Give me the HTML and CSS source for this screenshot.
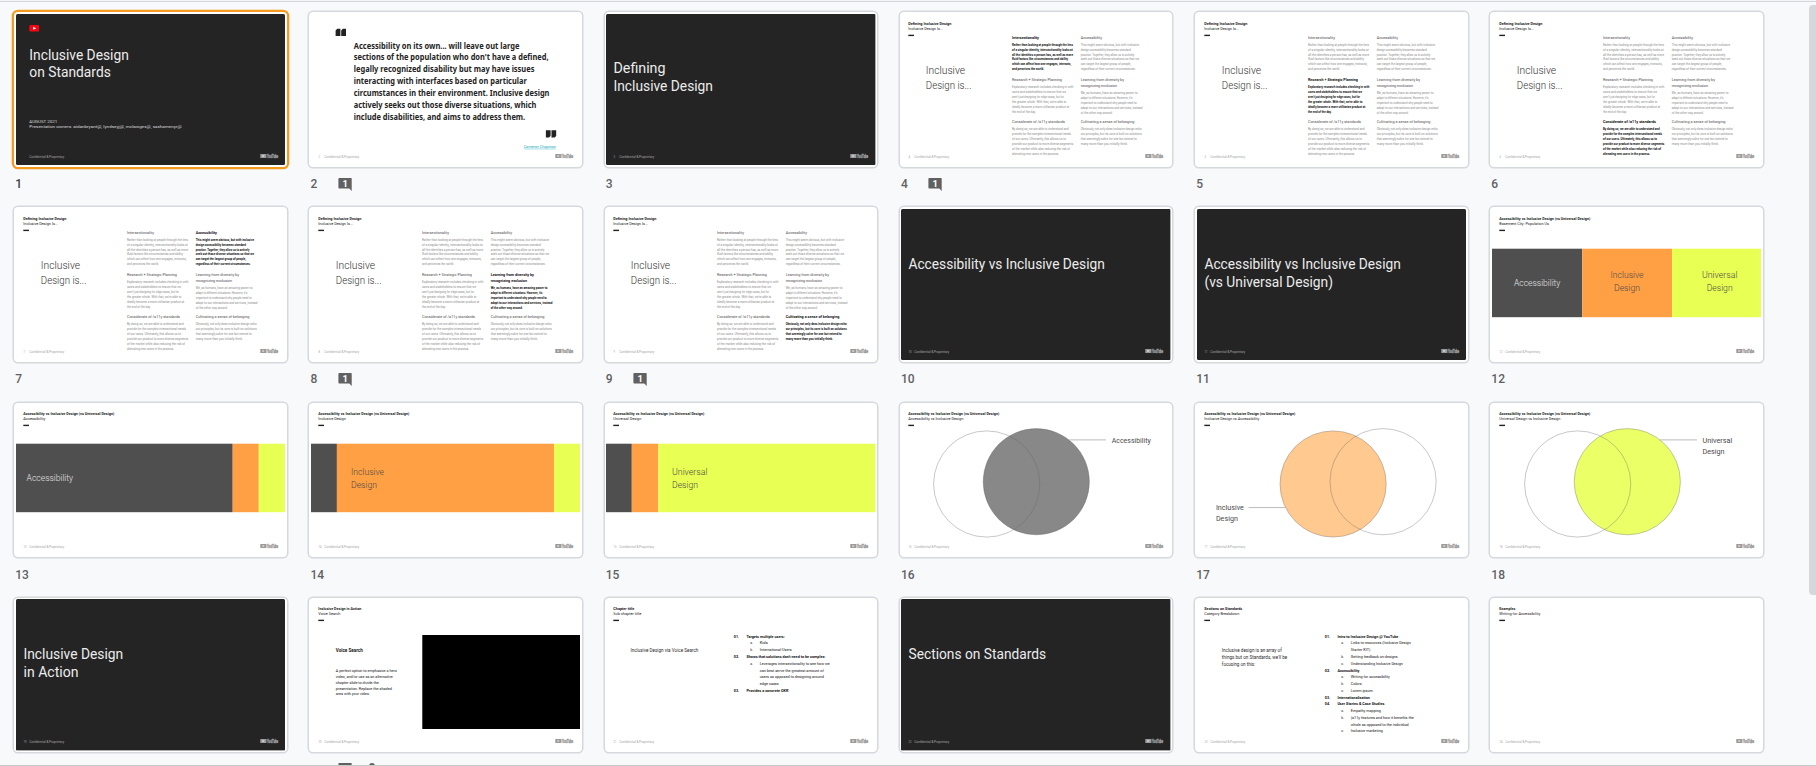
FILE: index.html
```
<!DOCTYPE html>
<html lang="en">
<head>
<meta charset="utf-8">
<title>Inclusive Design on Standards</title>
<link rel="stylesheet" href="styles.css">
</head>
<body>
<main class="viewport">
  <div class="grid" id="grid"></div>
  <div class="scrollbar"><div class="thumb"></div></div>
</main>
<script src="slides.js"></script>
</body>
</html>
```
FILE: styles.css
```
* { box-sizing: border-box; }
html, body { margin: 0; height: 100%; overflow: hidden; }
body { background: #f8f9fb; font-family: Roboto, "Liberation Sans", sans-serif; }
.viewport {
  display: flex;
  justify-content: space-between;
  height: 766px;
  overflow: hidden;
  border-top: 1px solid #f3f4f6;
  border-bottom: 1px solid #c6c9cc;
  box-shadow: inset 0 1px 0 #d3d6da;
}
.grid {
  display: grid;
  grid-template-columns: repeat(6, 272.6px);
  grid-auto-rows: 195.2px;
  column-gap: 22.65px;
  padding: 11.2px 0 0 14.2px;
}
.card {
  width: 272.6px;
  height: 154.6px;
  padding: 1.6px;
  background: #fff;
  border-radius: 4px;
  box-shadow: 0 0 0 1.5px #d5d8dc;
}
.card.selected { box-shadow: 0 0 0 2.3px #f49b1f; }
.slide { display: block; width: 269.4px; height: 151.4px; border-radius: 1.5px; overflow: hidden; }
.caption { display: flex; align-items: center; height: 34px; padding: 1px 0 0 1px; }
.number { width: 27.2px; font-size: 12px; font-weight: 500; line-height: 14px; color: #5f6163; }
.selected + .caption .number { color: #3c4043; }
.comment { display: block; width: 14px; height: 13px; }
.comment text { font-size: 9.5px; font-weight: 700; fill: #fff; }
.person { display: block; width: 6px; height: 13px; margin-left: 17px; }
.scrollbar { width: 7px; padding-top: 4px; }
.thumb { height: 590px; background: #d5d7db; border-radius: 4px 0 0 4px; }

.title { font-size: 14.2px; font-weight: 400; fill: #ececec; }
.meta { font-size: 4.4px; fill: #dadada; }
.foot { font-size: 2.6px; fill: #a6a6a6; }
.head { font-size: 4.3px; font-weight: 700; fill: #222; }
.sub { font-size: 4.3px; fill: #222; }
.big { font-size: 11px; font-weight: 300; fill: #333; }
.mid { font-size: 9px; font-weight: 300; fill: #4e4a44; }
.mid.light { fill: #e4e4e4; }
.label { font-size: 7.6px; font-weight: 400; fill: #4a4a4a; }
.quote { font-family: "Noto Sans", Roboto, sans-serif; font-size: 7.9px; font-weight: 700; fill: #232323; }
.link { font-size: 3.9px; fill: #22aabb; text-decoration: underline; }
.ch { font-size: 4.2px; fill: #505050; }
.cb { font-size: 3.4px; fill: #8a8a8a; }
.ch.on { font-weight: 700; fill: #111; }
.cb.on { font-weight: 700; fill: #111; }
.copy { font-size: 4.8px; fill: #2c2c2c; }
.strong { font-size: 4.8px; font-weight: 700; fill: #151515; }
.item { font-size: 4px; fill: #111; }
.item.b { font-weight: 700; fill: #111; }
.brand { font-size: 4.9px; font-weight: 900; fill: #9b9b9b; stroke: #9b9b9b; stroke-width: .35; }
```
FILE: slides.js
```
// Slide coordinates use a 269.4 x 151.4 canvas.
const esc = s => s.replace(/&/g, '&amp;').replace(/</g, '&lt;');
const t = (cls, x, y, len, text, anchor) =>
  `<text class="${cls}" x="${x}" y="${y}" textLength="${len}" lengthAdjust="spacingAndGlyphs"${anchor ? ` text-anchor="${anchor}"` : ''}>${esc(text)}</text>`;
const box = (x, y, w, h, fill) => `<rect x="${x}" y="${y}" width="${w}" height="${h}" fill="${fill}"/>`;
const GRAY = '#4f4f4f', ORANGE = '#ffa045', LIME = '#e8ff54';

const brand = box(244.3, 140, 6.2, 4, '#9b9b9b') +
  '<path d="M246.5 141l2.2 1-2.2 1z" fill="#eee"/>' + t('brand', 250.9, 143.9, 11.2, 'YouTube');
const footer = n => (n > 1 ? t('foot', 7.6, 143.6, n > 9 ? 3 : 1.5, String(n)) : '') +
  t('foot', 13.2, 143.6, 35, 'Confidential & Proprietary');
const header = (a, la, b, lb) => t('head', 7.3, 11, la, a) + t('sub', 7.3, 15.8, lb, b) + box(7.3, 20.7, 5.7, 1.4, '#222');
const dark = body => ({ dark: true, body });
const light = body => ({ body });

const ACC = 'Accessibility vs Inclusive Design (vs Universal Design)';

const columns = [
  { x: 111, y: 25, b: 31.7, head: [['Intersectionality', 27]], body: [
    ['Rather than looking at people through the lens', 61], ['of a singular identity, intersectionality looks at', 60.7],
    ['all the identities a person has, as well as more', 61], ['fluid factors like circumstances and ability', 56],
    ['which can affect how one engages, interacts,', 59.3], ['and perceives the world.', 32]] },
  { x: 111, y: 67, b: 74, head: [['Research + Strategic Planning', 50]], body: [
    ['Exploratory research includes checking in with', 61.3], ['users and stakeholders to ensure that we', 54],
    ["aren't just designing for edge cases, but for", 52], ["the greater whole. With that, we're able to", 54.3],
    ['ideally become a more utilitarian product at', 57.3], ['the end of the day.', 23.7]] },
  { x: 111, y: 109, b: 116, head: [['Considerate of /a11y standards', 53]], body: [
    ['By doing so, we are able to understand and', 56.7], ['provide for the complex intersectional needs', 59],
    ['of our users. Ultimately, this allows us to', 54], ['provide our product to more diverse segments', 61.3],
    ['of the market while also reducing the risk of', 58], ['alienating new users in the process.', 47]] },
  { x: 179.7, y: 25, b: 31.7, head: [['Accessibility', 21.3]], body: [
    ['This might seem obvious, but with inclusive', 58.3], ['design accessibility becomes standard', 50.3],
    ['practice. Together, they allow us to actively', 53.7], ['seek out those diverse situations so that we', 58.3],
    ['can target the largest group of people,', 50.3], ['regardless of their current circumstances.', 55]] },
  { x: 179.7, y: 67, b: 80, head: [['Learning from diversity by', 43.3], ['recognizing exclusion', 36.3]], body: [
    ['We, as humans, have an amazing power to', 56.7], ["adapt to different situations. However, it's", 51.7],
    ['important to understand why people need to', 56], ['adapt to our interactions and services, instead', 61.7],
    ['of the other way around.', 32]] },
  { x: 179.7, y: 109, b: 116, head: [['Cultivating a sense of belonging', 53.7]], body: [
    ['Obviously, not only does inclusive design echo', 61], ['our principles, but its core is built on solutions', 61],
    ['that seemingly solve for one but extend to', 56], ['many more than you initially think.', 47.3]] }
];
const definition = active => light(
  header('Defining Inclusive Design', 43, 'Inclusive Design Is...', 34.7) +
  t('big', 24.8, 60, 39.3, 'Inclusive') + t('big', 24.8, 75.4, 45.7, 'Design is...') +
  columns.map((c, i) => {
    const on = i === active ? ' on' : '';
    return c.head.map(([s, l], k) => t('ch' + on, c.x, c.y + k * 6, l, s)).join('') +
      c.body.map(([s, l], k) => t('cb' + on, c.x, (c.b + k * 4.93).toFixed(2), l, s)).join('');
  }).join(''));

const bands = (a, b) => box(0, 39.7, a, 68.5, GRAY) + box(a, 39.7, b - a, 68.5, ORANGE) + box(b, 39.7, 269.4 - b, 68.5, LIME);
const ring = (cx, cy, fill) => `<circle cx="${cx}" cy="${cy}" r="53.1" fill="${fill}" stroke="#666" stroke-opacity=".45" stroke-width=".8"/>`;
const rule = (x1, x2, y) => `<path d="M${x1} ${y}H${x2}" stroke="#aaa" stroke-width=".8"/>`;

// Outline rows: [kind, marker, text, length, baseline]
const outline = rows => rows.map(([k, m, s, l, y]) => {
  const b = k ? '' : ' b';
  return (m ? t('item' + b, k ? 144.3 : 127.8, y, k ? 2.6 : 5.4, m) : '') + t('item' + b, k ? 153.8 : 140.4, y, l, s);
}).join('');

const slides = [
  dark(`<rect x="13.3" y="11" width="9.8" height="6.4" rx="1" fill="#f40612"/><path d="M17.2 12.7l3 1.5-3 1.5z" fill="#fff"/>` +
    t('title', 13.3, 45.6, 99.5, 'Inclusive Design') + t('title', 13.3, 63.4, 81.5, 'on Standards') +
    t('meta', 13.3, 108.8, 28, 'AUGUST 2021') +
    t('meta', 13.3, 113.8, 152.3, 'Presentation owners: aidanbryant@, lyndseyj@, mclawges@, sashamenyr@')),
  light('<path d="M24.6 22v-5.6l1.6-1.7h3.2V22zM30.2 22v-5.6l1.6-1.7h3.2V22z" fill="#222"/>' +
    '<path d="M234.9 116.3h4.7v5.6l-1.6 1.7h-3.1zM240.5 116.3h4.7v5.6l-1.6 1.7h-3.1z" fill="#222"/>' +
    [['Accessibility on its own... will leave out large', 165.7, 35], ["sections of the population who don't have a defined,", 194.8, 46.4],
     ['legally recognized disability but may have issues', 180.6, 58.2], ['interacting with interfaces based on particular', 173, 70.2],
     ['circumstances in their environment. Inclusive design', 195.6, 82.2], ['actively seeks out those diverse situations, which', 182.5, 94.2],
     ['include disabilities, and aims to address them.', 171.4, 106.2]].map(([s, l, y]) => t('quote', 42.8, y, l, s)).join('') +
    t('link', 212.7, 133.8, 32.2, 'Cameron Chapman')),
  dark(t('title', 7.5, 59.5, 52, 'Defining') + t('title', 7.5, 77.5, 99.5, 'Inclusive Design')),
  definition(0), definition(1), definition(2), definition(3), definition(4), definition(5),
  dark(t('title', 7.5, 60, 196.3, 'Accessibility vs Inclusive Design')),
  dark(t('title', 7.5, 60, 196.3, 'Accessibility vs Inclusive Design') + t('title', 7.5, 77.8, 128.5, '(vs Universal Design)')),
  light(header(ACC, 91, 'Basement City: Population Us', 49.6) + bands(90.2, 180) +
    t('mid light', 45.2, 76.6, 46.5, 'Accessibility', 'middle') +
    t('mid', 135, 68.7, 33, 'Inclusive', 'middle') + t('mid', 135, 81.7, 26, 'Design', 'middle') +
    t('mid', 227.7, 68.7, 35.5, 'Universal', 'middle') + t('mid', 227.7, 81.7, 26, 'Design', 'middle')),
  light(header(ACC, 91, 'Accessibility', 22) + bands(216.7, 242.8) + t('mid light', 10.6, 77.5, 46.5, 'Accessibility')),
  light(header(ACC, 91, 'Inclusive Design', 27.5) + bands(25.9, 243) + t('mid', 40, 71.4, 33, 'Inclusive') + t('mid', 40, 84.4, 26, 'Design')),
  light(header(ACC, 91, 'Universal Design', 28) + bands(25.8, 52.4) + t('mid', 66, 71.4, 35.5, 'Universal') + t('mid', 66, 84.4, 26, 'Design')),
  light(header(ACC, 91, 'Accessibility vs Inclusive Design', 55) + ring(135.3, 77.7, '#888') + ring(85.7, 80, 'none') +
    rule(167.8, 205, 35.9) + t('label', 210.8, 38.8, 39, 'Accessibility')),
  light(header(ACC, 91, 'Inclusive Design vs Accessibility', 55) + ring(136.1, 80, '#ffc98f') + ring(186.1, 77.7, 'none') +
    rule(51.5, 88.5, 103.6) + t('label', 18.9, 106, 28, 'Inclusive') + t('label', 18.9, 116.7, 22, 'Design')),
  light(header(ACC, 91, 'Universal Design vs Inclusive Design', 61) + ring(135.3, 77.7, '#ebff66') + ring(85.7, 80, 'none') +
    rule(167.8, 205, 35.9) + t('label', 210.5, 38.8, 29.7, 'Universal') + t('label', 210.5, 49.7, 22, 'Design')),
  dark(t('title', 7.5, 60, 99.7, 'Inclusive Design') + t('title', 7.5, 78, 55, 'in Action')),
  light(header('Inclusive Design in Action', 43, 'Voice Search', 22) + t('strong', 24.8, 52.9, 27, 'Voice Search') +
    [['A perfect option to emphasize a hero', 61, 72.8], ['video, and/or use as an alternative', 57, 78.8], ['chapter slide to divide the', 43, 84.8],
     ['presentation. Replace the shaded', 56, 90.6], ['area with your video.', 34, 96]].map(([s, l, y]) => t('item', 24.8, y, l, s)).join('') +
    box(111.3, 36, 158.1, 94, '#000')),
  light(header('Chapter title', 21, 'Sub chapter title', 28) + t('copy', 24.4, 52.9, 68, 'Inclusive Design via Voice Search') + outline([
    [0, '01.', 'Targets multiple users:', 38.3, 38.9], [1, 'a.', 'Kids', 8, 45], [1, 'b.', 'International Users', 32, 52],
    [0, '02.', "Shows that solutions don't need to be complex:", 79, 59], [1, 'a.', 'Leverages intersectionality to see how we', 70, 66],
    [1, '', 'can best serve the greatest amount of', 64, 72.7], [1, '', 'users as opposed to designing around', 64, 79],
    [1, '', 'edge cases', 19, 86], [0, '03.', 'Provides a concrete OKR', 42, 93]])),
  dark(t('title', 7.5, 60, 137.6, 'Sections on Standards')),
  light(header('Sections on Standards', 38, 'Category Breakdown', 35) +
    t('copy', 24.8, 53, 60, 'Inclusive design is an array of') + t('copy', 24.8, 60, 65.5, "things but on Standards, we'll be") + t('copy', 24.8, 67, 33.5, 'focusing on this:') +
    outline([
    [0, '01.', 'Intro to Inclusive Design @ YouTube', 61, 39], [1, 'a.', 'Links to resources (Inclusive Design', 60, 45], [1, '', 'Starter KIT)', 19.5, 52],
    [1, 'b.', 'Getting feedback on designs', 47, 59], [1, 'c.', 'Understanding Inclusive Design', 52, 66], [0, '02.', 'Accessibility', 22, 73],
    [1, 'a.', 'Writing for accessibility', 39, 79], [1, 'b.', 'Colors', 11, 86], [1, 'c.', 'Lorem ipsum', 22, 93], [0, '03.', 'Internationalization', 32.5, 100],
    [0, '04.', 'User Stories & Case Studies', 47, 106], [1, 'a.', 'Empathy mapping', 30, 113], [1, 'b.', '(a11y features and how it benefits the', 63, 120],
    [1, '', 'whole as opposed to the individual', 58, 127], [1, 'c.', 'Inclusive marketing', 32, 133]])),
  light(header('Examples', 16, 'Writing for Accessibility', 41))
];

const commented = new Set([2, 4, 8, 9, 20]);
const LAST_CAPTIONED = 18;
const badge = count => `<svg class="comment" viewBox="0 0 14 13"><path d="M1.2.1h11.9q.6 0 .6.6v12.2l-2.4-2.3H1.2q-.8 0-.8-.8V.9q0-.8.8-.8z" fill="#616161"/>${count ? `<text x="4.4" y="8.8">${count}</text>` : ''}</svg>`;
const person = '<svg class="person" viewBox="0 0 6 13"><circle cx="3" cy="3" r="3" fill="#616161"/></svg>';

document.getElementById('grid').innerHTML = slides.map((s, i) => {
  const n = i + 1;
  const captioned = n <= LAST_CAPTIONED;
  return `<div class="cell"><div class="card${n === 1 ? ' selected' : ''}">` +
    `<svg class="slide" viewBox="0 0 269.4 151.4">${box(0, 0, 269.4, 151.4, s.dark ? '#242424' : '#fff')}${s.body}${footer(n)}${brand}</svg></div>` +
    `<div class="caption"><span class="number">${captioned ? n : ''}</span>${commented.has(n) ? badge(captioned ? 1 : 0) : ''}${n === 20 ? person : ''}</div></div>`;
}).join('');
```
